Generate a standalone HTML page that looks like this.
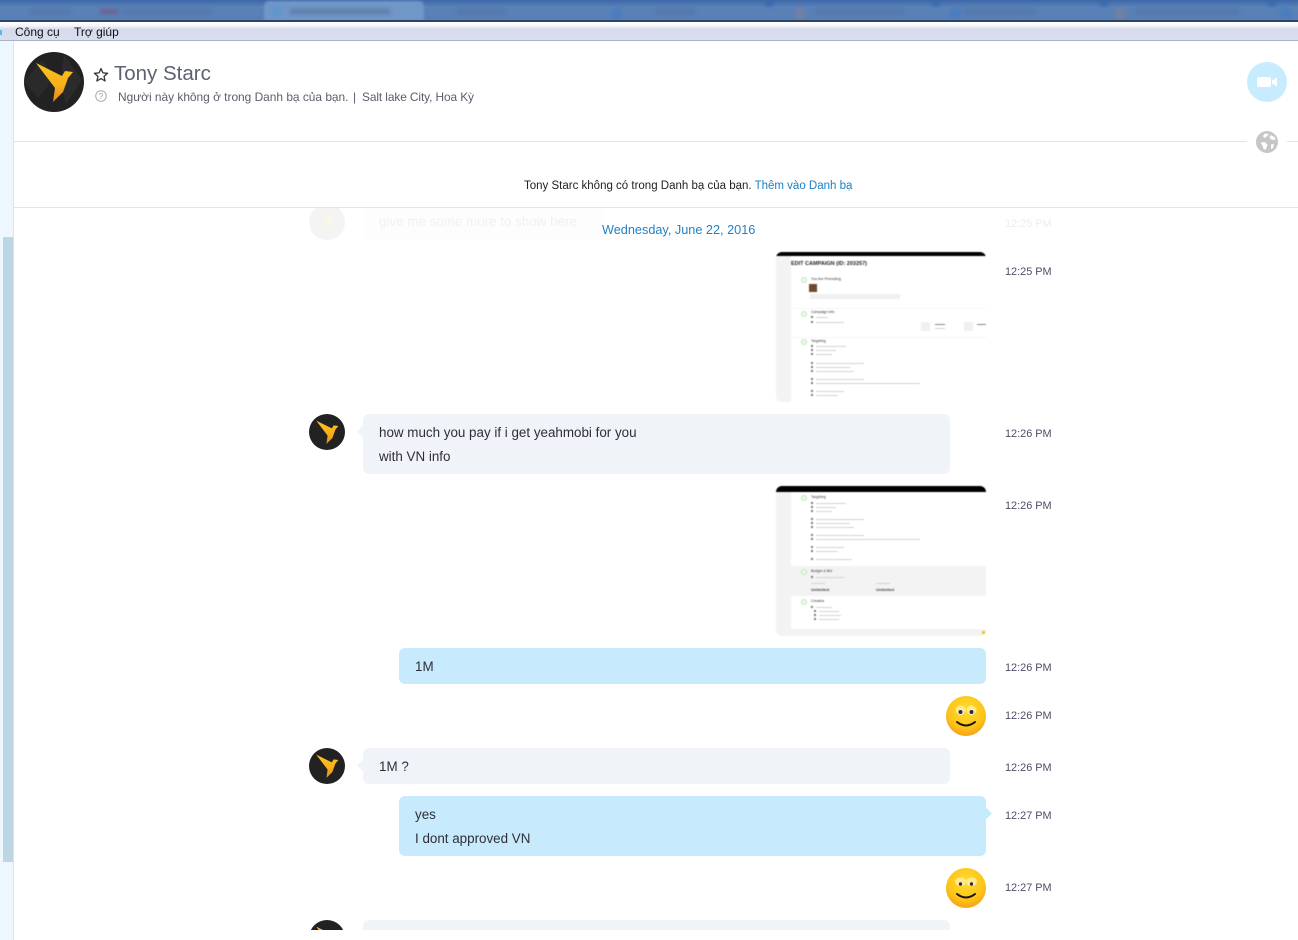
<!DOCTYPE html>
<html lang="vi"><head><meta charset="utf-8"><title>Tony Starc</title>
<style>
*{box-sizing:border-box}
html,body{margin:0;padding:0;width:1298px;height:940px;overflow:hidden;background:#fff}
body{font-family:"Liberation Sans","Noto Sans CJK JP",sans-serif;color:#333;position:relative}
.a{position:absolute}
.t{position:absolute;white-space:nowrap}
.time{position:absolute;left:1005px;margin-top:1px;font-size:10.9px;color:#4d4f68;line-height:14px;white-space:nowrap}
.in{position:absolute;left:363px;width:587px;background:#f0f3f8;border-radius:6px}
.in:before{content:"";position:absolute;left:-4px;top:13px;width:9px;height:9px;background:#f0f3f8;transform:rotate(45deg)}
.out{position:absolute;left:399px;width:587px;background:#c7ebfc;border-radius:6px}
.m{position:absolute;left:16px;margin-top:1px;font-size:13.4px;line-height:24px;color:#2e2e38;white-space:nowrap}
.thumb{position:absolute;left:776px;width:210px;background:#f3f3f3;border-radius:6px;overflow:hidden}
.thumb .top{position:absolute;left:0;top:0;width:210px;background:#000}
.thumb .pg{position:absolute;left:15px;top:4px;width:195px;background:#fff}
.l{position:absolute;height:1px;background:#d2d2d2}
.b{position:absolute;width:2px;height:2px;background:#777}
.g{position:absolute;width:6px;height:6px;border-radius:50%;border:1px solid #bfe8b8;background:#eef9eb}
.tx{position:absolute;font-size:3.6px;line-height:5px;white-space:nowrap;color:#666}
.bl{position:absolute;filter:blur(2px)}
</style></head>
<body>
<!-- top blurred tab strip -->
<div class="a" style="left:0;top:0;width:1298px;height:20px;background:linear-gradient(#3d68a8,#5a82b8 35%,#5880b6);overflow:hidden">
  <div class="a" style="left:264px;top:1px;width:160px;height:20px;background:#7196c8;border-radius:5px 5px 0 0;filter:blur(1px)"></div>
  <div class="bl" style="left:272px;top:6px;width:10px;height:10px;background:#5f95cf"></div>
  <div class="bl" style="left:290px;top:9px;width:100px;height:5px;background:#5d7ba6"></div>
  <div class="bl" style="left:100px;top:9px;width:18px;height:5px;background:#70608e"></div>
  <div class="bl" style="left:122px;top:9px;width:90px;height:5px;background:#5276a9"></div>
  <div class="bl" style="left:30px;top:9px;width:40px;height:5px;background:#5276a9"></div>
  <div class="bl" style="left:456px;top:9px;width:50px;height:5px;background:#5276a9"></div>
  <div class="bl" style="left:612px;top:8px;width:10px;height:11px;background:#4a7cbf"></div>
  <div class="bl" style="left:655px;top:9px;width:40px;height:5px;background:#5276a9"></div>
  <div class="bl" style="left:795px;top:8px;width:10px;height:11px;background:#727fa5"></div>
  <div class="bl" style="left:815px;top:9px;width:90px;height:5px;background:#5276a9"></div>
  <div class="bl" style="left:950px;top:8px;width:11px;height:11px;background:#4a7cbf"></div>
  <div class="bl" style="left:965px;top:9px;width:70px;height:5px;background:#5276a9"></div>
  <div class="bl" style="left:1115px;top:8px;width:11px;height:11px;background:#727fa5"></div>
  <div class="bl" style="left:1135px;top:9px;width:105px;height:5px;background:#5276a9"></div>
  <div class="bl" style="left:1280px;top:8px;width:11px;height:11px;background:#4a7cbf"></div>
  <div class="bl" style="left:765px;top:0;width:8px;height:6px;background:#3567ad"></div>
  <div class="bl" style="left:932px;top:0;width:8px;height:6px;background:#3567ad"></div>
  <div class="bl" style="left:1100px;top:0;width:8px;height:6px;background:#3567ad"></div>
  <div class="bl" style="left:1268px;top:0;width:8px;height:6px;background:#3567ad"></div>
</div>
<div class="a" style="left:0;top:20px;width:1298px;height:2px;background:#2f4464"></div>
<!-- menu -->
<div class="a" style="left:0;top:22px;width:1298px;height:19px;background:linear-gradient(#fff,#f3f5fb 4px,#d6dbec 7px,#d9deef);border-bottom:1px solid #aab3c6"></div>
<div class="a" style="left:0;top:30px;width:2px;height:5px;background:#5db7ea"></div>
<div class="t" style="left:15px;top:24px;font-size:12px;line-height:16px;color:#111">Công cụ</div>
<div class="t" style="left:74px;top:24px;font-size:12px;line-height:16px;color:#111">Trợ giúp</div>

<!-- left strip -->
<div class="a" style="left:0;top:41px;width:14px;height:899px;background:#eef7fd;border-right:1px solid #d4e6f2"></div>
<div class="a" style="left:3px;top:237px;width:10px;height:625px;background:#bcd6e4"></div>

<!-- header -->
<svg class="a" style="left:24px;top:52px" width="60" height="60" viewBox="0 0 60 60">
  <defs><linearGradient id="y" x1="0" y1="0" x2="0" y2="1"><stop offset="0" stop-color="#fdc41e"/><stop offset=".55" stop-color="#f8b01c"/><stop offset="1" stop-color="#e88a1b"/></linearGradient></defs>
  <circle cx="30" cy="30" r="30" fill="#222"/>
  <path d="M0 30L18 8L30 26L14 46Z" fill="#2a2a2a"/><path d="M40 3L58 28L42 52L36 30Z" fill="#2b2b2b"/>
  <path d="M12 11L38 24L41 19L49 20L44 26L39 40L29 50L31 36Z" fill="url(#y)"/>
</svg>
<svg class="a" style="left:93px;top:67px" width="16" height="16" viewBox="0 0 16 16"><path d="M8 1.6L9.9 5.9L14.6 6.3L11 9.4L12.1 14L8 11.6L3.9 14L5 9.4L1.4 6.3L6.1 5.9Z" fill="none" stroke="#333" stroke-width="1.3" stroke-linejoin="round"/></svg>
<div class="t" style="left:114px;top:60px;font-size:20.5px;line-height:28px;color:#5d6170">Tony Starc</div>
<svg class="a" style="left:95px;top:90px" width="12" height="12" viewBox="0 0 12 12"><circle cx="6" cy="6" r="5.3" fill="none" stroke="#aaa" stroke-width="1"/><text x="6" y="9" font-size="8" text-anchor="middle" fill="#999" font-family="Liberation Sans">?</text></svg>
<div class="t" style="left:118px;top:89px;font-size:11.9px;line-height:16px;color:#5a5d6d">Người này không ở trong Danh bạ của bạn.</div>
<div class="t" style="left:353px;top:89px;font-size:11.9px;line-height:16px;color:#5a5d6d">|</div>
<div class="t" style="left:362px;top:89px;font-size:11.9px;line-height:16px;color:#5a5d6d;letter-spacing:-.1px">Salt lake City, Hoa Kỳ</div>

<!-- video button -->
<div class="a" style="left:1247px;top:62px;width:40px;height:40px;border-radius:50%;background:#c6ecfd"></div>
<svg class="a" style="left:1257px;top:76px" width="21" height="12" viewBox="0 0 21 12"><rect x="0" y="1" width="14" height="10" rx="2" fill="#fff"/><path d="M15 4.5L20 1.5V10.5L15 7.5Z" fill="#fff"/></svg>

<!-- divider and globe -->
<div class="a" style="left:14px;top:141px;width:1233px;height:1px;background:#dfe5ea"></div>
<div class="a" style="left:1287px;top:141px;width:11px;height:1px;background:#dfe5ea"></div>
<svg class="a" style="left:1256px;top:131px" width="22" height="22" viewBox="0 0 22 22"><circle cx="11" cy="11" r="11" fill="#c6c6c6"/><path d="M8 3L12.5 2.5L11.500 5L8.500 7L7 5.500ZM14.500 4L18.500 6L19.500 9L15.500 8.500L13.500 6.500ZM4.500 11.500L9 11L11.500 14L9.500 19L7.500 18L6.500 14.500ZM15 13.500L18 13L17 17L15 18Z" fill="#fff"/></svg>

<!-- notice -->
<div class="t" style="left:524px;top:179px;font-size:11.5px;line-height:15px;color:#222">Tony Starc không có trong Danh bạ của bạn. <span style="color:#1a7fc4">Thêm vào Danh bạ</span></div>
<div class="a" style="left:14px;top:207px;width:1284px;height:1px;background:#dfe5ea"></div>

<!-- faded message -->
<div class="a" style="left:309px;top:208px;width:36px;height:32px;overflow:hidden"><div class="a" style="left:0;top:-4px;width:36px;height:36px;border-radius:50%;background:#f4f4f4"></div></div>
<svg class="a" style="left:315px;top:210px" width="24" height="24" viewBox="0 0 24 24"><path d="M4 1L14 8L21 6L16 11L13 22L10 10Z" fill="#fbf6e6"/></svg>
<div class="a" style="left:363px;top:208px;width:240px;height:32px;background:#fdfdfe"></div>
<div class="t" style="left:379px;top:213px;font-size:13.4px;line-height:18px;color:#f1f1f3">give me some more to show here</div>
<div class="time" style="top:216px;color:#ededf0">12:25 PM</div>

<div class="t" style="left:602px;top:222px;font-size:12.7px;line-height:17px;color:#2382c6">Wednesday, June 22, 2016</div>

<!-- thumb 1 -->
<div class="thumb" style="top:252px;height:150px;filter:blur(.45px)">
  <div class="top" style="height:4px"></div>
  <div class="pg" style="height:146px">
    <div class="tx" style="left:0;top:6px;font-size:5.5px;font-weight:bold;color:#222">EDIT CAMPAIGN (ID: 203257)</div>
    <div class="g" style="left:10px;top:21px"></div><div class="tx" style="left:20px;top:21px;color:#333">You Are Promoting</div>
    <div class="a" style="left:18px;top:28px;width:8px;height:8px;background:#6e4a2c"></div>
    <div class="l" style="left:19px;top:38px;width:90px;height:5px;background:#f0f0f0"></div>
    <div class="a" style="left:0;top:52px;width:195px;height:1px;background:#f5f5f5"></div>
    <div class="g" style="left:10px;top:55px"></div><div class="tx" style="left:20px;top:54px;color:#333">Campaign Info</div>
    <div class="b" style="left:20px;top:60px"></div><div class="l" style="left:25px;top:61px;width:12px"></div>
    <div class="b" style="left:20px;top:65px"></div><div class="l" style="left:25px;top:66px;width:28px"></div>
    <div class="a" style="left:130px;top:66px;width:9px;height:9px;background:#f0f0f0"></div><div class="l" style="left:144px;top:68px;width:10px;background:#888"></div><div class="l" style="left:144px;top:72px;width:10px"></div>
    <div class="a" style="left:173px;top:66px;width:9px;height:9px;background:#f0f0f0"></div><div class="l" style="left:186px;top:68px;width:9px;background:#888"></div>
    <div class="a" style="left:0;top:81px;width:195px;height:1px;background:#f5f5f5"></div>
    <div class="g" style="left:10px;top:83px"></div><div class="tx" style="left:20px;top:83px;color:#333">Targeting</div>
    <div class="b" style="left:20px;top:89px"></div><div class="l" style="left:25px;top:90px;width:30px"></div>
    <div class="b" style="left:20px;top:93px"></div><div class="l" style="left:25px;top:94px;width:20px"></div>
    <div class="b" style="left:20px;top:97px"></div><div class="l" style="left:25px;top:98px;width:16px"></div>
    <div class="b" style="left:20px;top:106px"></div><div class="l" style="left:25px;top:107px;width:48px"></div>
    <div class="b" style="left:20px;top:110px"></div><div class="l" style="left:25px;top:111px;width:34px"></div>
    <div class="b" style="left:20px;top:114px"></div><div class="l" style="left:25px;top:115px;width:38px"></div>
    <div class="b" style="left:20px;top:122px"></div><div class="l" style="left:25px;top:123px;width:48px"></div>
    <div class="b" style="left:20px;top:126px"></div><div class="l" style="left:25px;top:127px;width:104px"></div>
    <div class="b" style="left:20px;top:134px"></div><div class="l" style="left:25px;top:135px;width:28px"></div>
    <div class="b" style="left:20px;top:138px"></div><div class="l" style="left:25px;top:139px;width:22px"></div>
  </div>
</div>
<div class="time" style="top:264px">12:25 PM</div>

<!-- msg -->
<svg class="a" style="left:309px;top:414px" width="36" height="36" viewBox="0 0 60 60"><circle cx="30" cy="30" r="30" fill="#222"/><path d="M12 11L38 24L41 19L49 20L44 26L39 40L29 50L31 36Z" fill="url(#y)"/></svg>
<div class="in" style="top:414px;height:60px"><div class="m" style="top:6px">how much you pay if i get yeahmobi for you<br>with VN info</div></div>
<div class="time" style="top:426px">12:26 PM</div>

<!-- thumb 2 -->
<div class="thumb" style="top:486px;height:150px;filter:blur(.45px)">
  <div class="top" style="height:6px"></div>
  <div class="pg" style="top:6px;height:137px">
    <div class="g" style="left:10px;top:3px"></div><div class="tx" style="left:20px;top:3px;color:#333">Targeting</div>
    <div class="b" style="left:20px;top:10px"></div><div class="l" style="left:25px;top:11px;width:30px"></div>
    <div class="b" style="left:20px;top:14px"></div><div class="l" style="left:25px;top:15px;width:20px"></div>
    <div class="b" style="left:20px;top:18px"></div><div class="l" style="left:25px;top:19px;width:16px"></div>
    <div class="b" style="left:20px;top:26px"></div><div class="l" style="left:25px;top:27px;width:48px"></div>
    <div class="b" style="left:20px;top:30px"></div><div class="l" style="left:25px;top:31px;width:34px"></div>
    <div class="b" style="left:20px;top:34px"></div><div class="l" style="left:25px;top:35px;width:38px"></div>
    <div class="b" style="left:20px;top:42px"></div><div class="l" style="left:25px;top:43px;width:48px"></div>
    <div class="b" style="left:20px;top:46px"></div><div class="l" style="left:25px;top:47px;width:104px"></div>
    <div class="b" style="left:20px;top:54px"></div><div class="l" style="left:25px;top:55px;width:28px"></div>
    <div class="b" style="left:20px;top:58px"></div><div class="l" style="left:25px;top:59px;width:22px"></div>
    <div class="b" style="left:20px;top:66px"></div><div class="l" style="left:25px;top:67px;width:36px"></div>
    <div class="a" style="left:-10px;top:74px;width:205px;height:30px;background:#f3f3f3"></div>
    <div class="g" style="left:10px;top:77px"></div><div class="tx" style="left:20px;top:77px;color:#333">Budget &amp; Bid</div>
    <div class="b" style="left:20px;top:84px"></div><div class="l" style="left:25px;top:85px;width:28px"></div>
    <div class="l" style="left:20px;top:91px;width:14px"></div><div class="l" style="left:85px;top:91px;width:14px"></div>
    <div class="tx" style="left:20px;top:95px;font-size:4px;font-weight:bold;color:#444">Unlimited</div><div class="tx" style="left:85px;top:95px;font-size:4px;font-weight:bold;color:#444">Unlimited</div>
    <div class="g" style="left:10px;top:107px"></div><div class="tx" style="left:20px;top:107px;color:#333">Creative</div>
    <div class="b" style="left:20px;top:114px"></div><div class="l" style="left:25px;top:115px;width:16px"></div>
    <div class="b" style="left:23px;top:118px"></div><div class="l" style="left:28px;top:119px;width:20px"></div>
    <div class="b" style="left:23px;top:122px"></div><div class="l" style="left:28px;top:123px;width:22px"></div>
    <div class="b" style="left:23px;top:126px"></div><div class="l" style="left:28px;top:127px;width:20px"></div>
  </div>
  <div class="a" style="left:206px;top:145px;width:3px;height:3px;background:#f2c21a"></div>
</div>
<div class="time" style="top:498px">12:26 PM</div>

<div class="out" style="top:648px;height:36px"><div class="m" style="top:6px">1M</div></div>
<div class="time" style="top:660px">12:26 PM</div>

<!-- smiley 1 -->
<svg class="a" style="left:946px;top:696px" width="40" height="40" viewBox="0 0 40 40"><defs><radialGradient id="s" cx=".5" cy=".35" r=".7"><stop offset="0" stop-color="#ffdc2e"/><stop offset=".65" stop-color="#fdc41a"/><stop offset="1" stop-color="#f39a12"/></radialGradient></defs><circle cx="20" cy="20" r="20" fill="url(#s)"/><ellipse cx="14.5" cy="14" rx="5" ry="4.5" fill="#ffe98a"/><ellipse cx="25.5" cy="14" rx="5" ry="4.5" fill="#ffe98a"/><ellipse cx="14.5" cy="16" rx="3" ry="3" fill="#fff3c0"/><ellipse cx="25.5" cy="16" rx="3" ry="3" fill="#fff3c0"/><circle cx="14.5" cy="16" r="2" fill="#2b2b44"/><circle cx="25.5" cy="16" r="2" fill="#2b2b44"/><path d="M11 26Q20 33 29 26" fill="none" stroke="#1c1208" stroke-width="2" stroke-linecap="round"/></svg>
<div class="time" style="top:708px">12:26 PM</div>

<svg class="a" style="left:309px;top:748px" width="36" height="36" viewBox="0 0 60 60"><circle cx="30" cy="30" r="30" fill="#222"/><path d="M12 11L38 24L41 19L49 20L44 26L39 40L29 50L31 36Z" fill="url(#y)"/></svg>
<div class="in" style="top:748px;height:36px"><div class="m" style="top:6px">1M ?</div></div>
<div class="time" style="top:760px">12:26 PM</div>

<div class="out" style="top:796px;height:60px"><div class="m" style="top:6px">yes<br>I dont approved VN</div></div>
<div class="a" style="left:981px;top:809px;width:9px;height:9px;background:#c7ebfc;transform:rotate(45deg)"></div>
<div class="time" style="top:808px">12:27 PM</div>

<!-- smiley 2 -->
<svg class="a" style="left:946px;top:868px" width="40" height="40" viewBox="0 0 40 40"><circle cx="20" cy="20" r="20" fill="url(#s)"/><ellipse cx="14.5" cy="13.5" rx="5.5" ry="4" fill="#ffe98a"/><ellipse cx="25.5" cy="13.5" rx="5.5" ry="4" fill="#ffe98a"/><ellipse cx="14.5" cy="16" rx="4" ry="1.8" fill="#fff3c0"/><ellipse cx="25.5" cy="16" rx="4" ry="1.8" fill="#fff3c0"/><circle cx="14.5" cy="16" r="1.7" fill="#2b2b44"/><circle cx="25.5" cy="16" r="1.7" fill="#2b2b44"/><path d="M11 26Q20 33 29 26" fill="none" stroke="#1c1208" stroke-width="2" stroke-linecap="round"/></svg>
<div class="time" style="top:880px">12:27 PM</div>

<!-- cut-off message -->
<div class="a" style="left:300px;top:920px;width:660px;height:10px;overflow:hidden">
  <svg class="a" style="left:9px;top:0" width="36" height="36" viewBox="0 0 60 60"><circle cx="30" cy="30" r="30" fill="#222"/><path d="M12 11L38 24L41 19L49 20L44 26L39 40L29 50L31 36Z" fill="url(#y)"/></svg>
  <div class="a" style="left:63px;top:0;width:587px;height:36px;background:#f0f3f8;border-radius:6px"></div>
</div>
</body></html>
